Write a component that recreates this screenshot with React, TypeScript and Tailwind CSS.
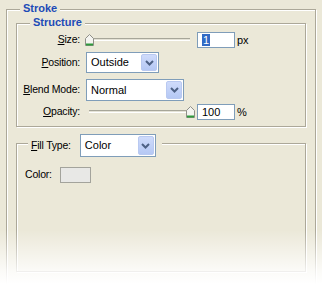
import React from 'react';

const Chevron: React.FC = () => (
  <svg width="9" height="6" viewBox="0 0 9 6">
    <path d="M1 1 L4.5 4.5 L8 1" fill="none" stroke="#4d6185" strokeWidth="2" />
  </svg>
);

const Select: React.FC<{ value: string; className: string }> = ({ value, className }) => (
  <div className={`flex bg-white border border-[#7f9db9] p-px ${className}`}>
    <div className="flex-1 flex items-center pl-[3px] text-[11px] text-black">{value}</div>
    <div className="w-[16px] flex items-center justify-center rounded-[2px] border border-[#b9c9f1] bg-[linear-gradient(to_bottom,#cfdbfb,#b5c8f4)]">
      <Chevron />
    </div>
  </div>
);

const Thumb: React.FC = () => (
  <svg width="9" height="12" viewBox="0 0 9 12">
    <path d="M0.5 4.5 L4.5 0.5 L8.5 4.5 L8.5 11.5 L0.5 11.5 Z" fill="#f4f4f0" stroke="#8f8f88" />
    <path d="M1 10.5 L8 10.5" stroke="#2f9a3c" strokeWidth="2" />
  </svg>
);

const Slider: React.FC<{ pos: string }> = ({ pos }) => (
  <div className="relative w-[115px] h-full">
    <div className="absolute left-[9px] right-[5px] top-[6px] h-[3px] border-t border-[#a7a699] border-b border-b-white bg-[#e4e2d6]" />
    <div className={`absolute top-[2px] ${pos}`}>
      <Thumb />
    </div>
  </div>
);

const Field: React.FC<{ children: React.ReactNode }> = ({ children }) => (
  <div className="ml-[2px] w-[38px] h-[16px] border border-[#7f9db9] bg-white flex items-center pl-[4px] text-[11px] text-black">
    {children}
  </div>
);

const Label: React.FC<{ k: string; rest: string }> = ({ k, rest }) => (
  <div className="w-[63px] text-right text-[10.5px] tracking-[-0.2px] text-black whitespace-nowrap">
    <span className="underline underline-offset-[1px]">{k}</span>
    {rest}
  </div>
);

const etched = 'border border-[#aca899] shadow-[1px_1px_0_#fff,inset_1px_1px_0_#fff]';

const App: React.FC = () => {
  return (
    <div className="relative w-[322px] h-[292px] overflow-hidden bg-[#ebe8d8] pt-[9px] pl-[6px] font-['Liberation_Sans',Arial,sans-serif]">
      <div className={`relative w-[310px] h-[276px] ${etched}`}>
        <div className="absolute left-[13px] top-[-8px] bg-[#ebe8d8] px-[3px] text-[11px] leading-[13px] font-bold text-[#1d4bb7]">
          Stroke
        </div>

        <div className={`relative ml-[9px] mt-[13px] w-[290px] pt-[8px] pb-[6px] ${etched}`}>
          <div className="absolute left-[13px] top-[-8px] bg-[#ebe8d8] px-[3px] text-[11px] leading-[13px] font-bold text-[#1d4bb7]">
            Structure
          </div>

          <div className="flex items-center h-[16px]">
            <Label k="S" rest="ize:" />
            <Slider pos="left-[5px]" />
            <Field>
              <span className="bg-[#316ac5] text-white leading-[12px] px-px">1</span>
            </Field>
            <span className="ml-[2px] text-[11px] text-black">px</span>
          </div>

          <div className="flex items-center mt-[4px] h-[21px]">
            <Label k="P" rest="osition:" />
            <Select value="Outside" className="ml-[6px] w-[73px] h-[21px]" />
          </div>

          <div className="flex items-center mt-[6px] h-[22px]">
            <Label k="B" rest="lend Mode:" />
            <Select value="Normal" className="ml-[6px] w-[98px] h-[22px]" />
          </div>

          <div className="flex items-center mt-[3px] h-[16px]">
            <Label k="O" rest="pacity:" />
            <Slider pos="left-[106px]" />
            <Field>100</Field>
            <span className="ml-[2px] text-[11px] text-black">%</span>
          </div>
        </div>

        <div className={`relative ml-[9px] mt-[16px] w-[290px] h-[129px] pt-[23px] pl-[8px] ${etched}`}>
          <div className="absolute left-[11px] top-[-10px] h-[23px] flex items-center bg-[#ebe8d8] pl-[3px] pr-[6px]">
            <span className="text-[10.5px] tracking-[-0.2px] text-black">
              <span className="underline underline-offset-[1px]">F</span>ill Type:
            </span>
            <Select value="Color" className="ml-[9px] w-[76px] h-[23px]" />
          </div>
          <div className="flex items-center h-[16px]">
            <span className="text-[10.5px] tracking-[-0.2px] text-black">Color:</span>
            <div className="ml-[8px] w-[31px] h-[16px] border border-[#a3a39c] bg-[#e8e8e6]" />
          </div>
        </div>
      </div>

      <div className="pointer-events-none absolute left-0 right-0 bottom-0 h-[62px] bg-[linear-gradient(to_bottom,rgba(255,255,255,0)_0,rgba(255,255,255,0.8)_40px,#fff_54px)]" />
    </div>
  );
};

export default App;
